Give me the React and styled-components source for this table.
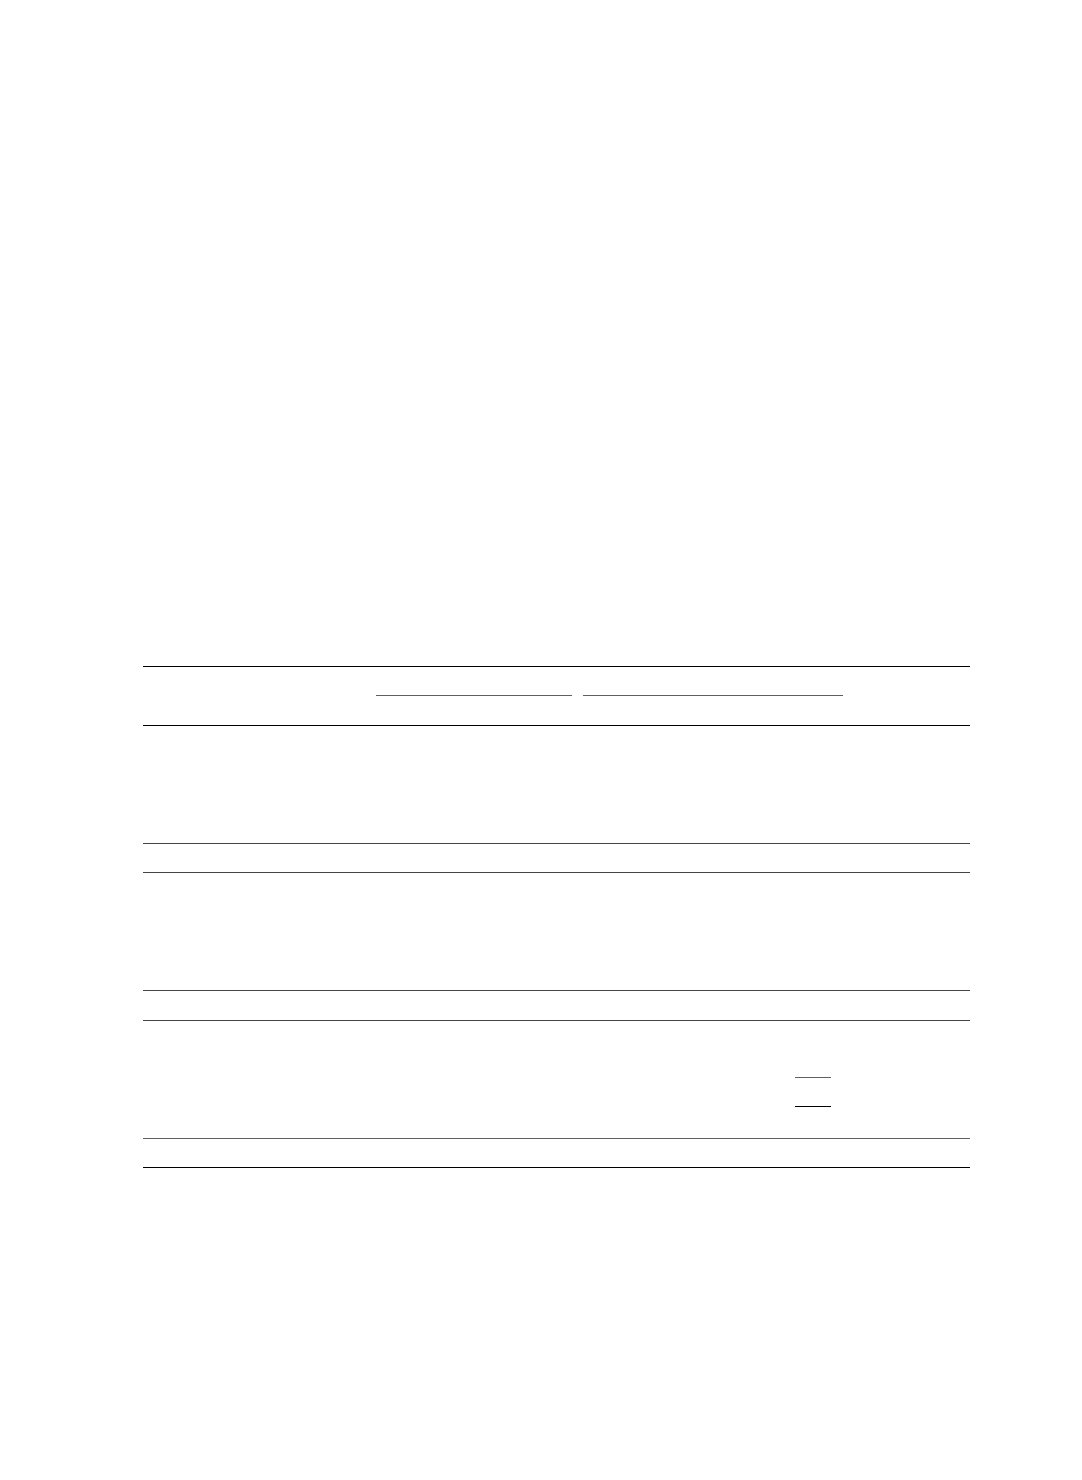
import styled, { createGlobalStyle } from "styled-components";

const GlobalStyle = createGlobalStyle`
    html, body {
        margin: 0;
        padding: 0;
        background: #fff;
        font-family: "Liberation Serif", "Times New Roman", serif;
    }
`

const COLS = "97px 68px 68px 50px 48px 49px 49px 75px 63px 65px 68px 64px 63px";

const Page = styled.div`
    width: 1082px;
    min-height: 1480px;
    box-sizing: border-box;
    padding: 666px 112px 0 143px;
    background: #fff;
`

const Table = styled.div`
    width: 827px;
    display: flex;
    flex-direction: column;
`

const Rule = styled.div`
    height: 1px;
    background: ${p => p.$tone || "#000"};
`

const HeadRow = styled.div`
    display: grid;
    grid-template-columns: ${COLS};
    height: 29px;
`

const GroupCell = styled.div`
    grid-column: ${p => p.$span};
    display: flex;
    align-items: flex-end;
    padding-left: ${p => p.$trim || 0}px;
`

const GroupLine = styled.div`
    flex: 1;
    height: 1px;
    background: #606060;
`

const Block = styled.div`
    display: grid;
    grid-template-columns: ${COLS};
    grid-template-rows: 29px 29px 29px 30px;
    height: 117px;
`

const TotalRow = styled.div`
    display: grid;
    grid-template-columns: ${COLS};
    height: ${p => p.$h}px;
`

const Cell = styled.div`
    display: flex;
    align-items: flex-end;
    justify-content: flex-end;
    padding: 0 12px 1px 0;
    color: #000;
    font-size: 15px;
`

const Underline = styled.div`
    width: 36px;
    height: 1px;
    background: ${p => p.$tone};
`

const cells = n => Array.from({ length: n }, (_, i) => <Cell key={i} />);

function BodyBlock({ marks }) {
    const items = [];
    for (let r = 0; r < 4; r++) {
        for (let c = 0; c < 13; c++) {
            const mark = marks && marks[r] && c === 10 ? marks[r] : null;
            items.push(
                <Cell key={`${r}-${c}`}>
                    {mark && <Underline $tone={mark} />}
                </Cell>
            );
        }
    }
    return <Block>{items}</Block>;
}

export default function App() {
    return <Page>
        <GlobalStyle />
        <Table>
            <Rule />
            <HeadRow>
                <GroupCell $span="4 / 8"><GroupLine /></GroupCell>
                <GroupCell $span="8 / 12" $trim={11}><GroupLine /></GroupCell>
            </HeadRow>
            <HeadRow>{cells(13)}</HeadRow>
            <Rule />
            <BodyBlock />
            <Rule $tone="#444" />
            <TotalRow $h={28}>{cells(13)}</TotalRow>
            <Rule $tone="#444" />
            <BodyBlock />
            <Rule $tone="#444" />
            <TotalRow $h={29}>{cells(13)}</TotalRow>
            <Rule $tone="#444" />
            <BodyBlock marks={[null, "#606060", "#000", null]} />
            <Rule $tone="#606060" />
            <TotalRow $h={28}>{cells(13)}</TotalRow>
            <Rule />
        </Table>
    </Page>
}
